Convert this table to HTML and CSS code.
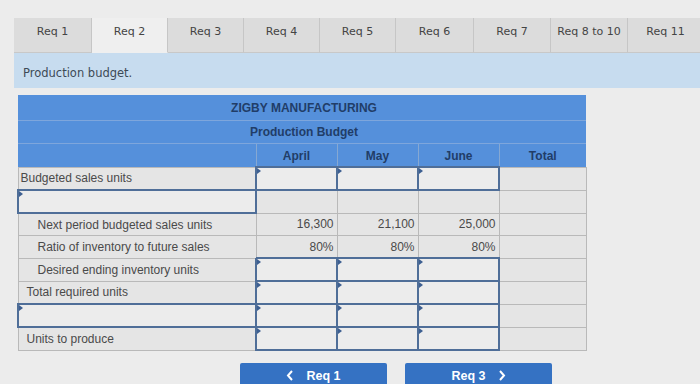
FILE: index.html
```html
<!DOCTYPE html>
<html>
<head>
<meta charset="utf-8">
<link rel="stylesheet" href="styles.css">
</head>
<body>
<div class="page">
  <div class="tabs">
    <div class="tab w78">Req 1</div>
    <div class="tab active">Req 2</div>
    <div class="tab">Req 3</div>
    <div class="tab">Req 4</div>
    <div class="tab">Req 5</div>
    <div class="tab w78">Req 6</div>
    <div class="tab w77">Req 7</div>
    <div class="tab w77">Req 8 to 10</div>
    <div class="tab">Req 11</div>
  </div>
  <div class="band">Production budget.</div>

  <table class="budget">
    <colgroup>
      <col class="c-label">
      <col class="c-num">
      <col class="c-num">
      <col class="c-num">
      <col class="c-total">
    </colgroup>
    <thead>
      <tr class="h1"><th colspan="5">ZIGBY MANUFACTURING</th></tr>
      <tr class="h2"><th colspan="5">Production Budget</th></tr>
      <tr class="h3"><th class="blank"></th><th>April</th><th>May</th><th>June</th><th>Total</th></tr>
    </thead>
    <tbody>
      <tr><td class="lbl">Budgeted sales units</td><td class="in"></td><td class="in"></td><td class="in"></td><td></td></tr>
      <tr><td class="lbl in"></td><td></td><td></td><td></td><td></td></tr>
      <tr><td class="lbl ind">Next period budgeted sales units</td><td class="num">16,300</td><td class="num">21,100</td><td class="num">25,000</td><td></td></tr>
      <tr><td class="lbl ind">Ratio of inventory to future sales</td><td class="num">80%</td><td class="num">80%</td><td class="num">80%</td><td></td></tr>
      <tr><td class="lbl ind">Desired ending inventory units</td><td class="in"></td><td class="in"></td><td class="in"></td><td></td></tr>
      <tr><td class="lbl sub">Total required units</td><td class="in"></td><td class="in"></td><td class="in"></td><td></td></tr>
      <tr><td class="lbl in"></td><td class="in"></td><td class="in"></td><td class="in"></td><td></td></tr>
      <tr><td class="lbl sub">Units to produce</td><td class="in"></td><td class="in"></td><td class="in"></td><td></td></tr>
    </tbody>
  </table>

  <div class="nav">
    <button class="btn"><svg width="8" height="11" viewBox="0 0 8 11"><path d="M6 1 L2 5.5 L6 10" fill="none" stroke="#fff" stroke-width="2"/></svg><span>Req 1</span></button>
    <button class="btn"><span>Req 3</span><svg width="8" height="11" viewBox="0 0 8 11"><path d="M2 1 L6 5.5 L2 10" fill="none" stroke="#fff" stroke-width="2"/></svg></button>
  </div>
</div>
</body>
</html>
```

FILE: styles.css
```css
html, body {
  margin: 0;
  padding: 0;
  background: #ececec;
  overflow: hidden;
}
.page {
  width: 700px;
  height: 384px;
  padding: 18px 0 0 14px;
  box-sizing: border-box;
  font-family: "DejaVu Sans", Verdana, sans-serif;
}
.tabs {
  display: flex;
  height: 35px;
}
.tab {
  width: 76px;
  flex: none;
  box-sizing: border-box;
  background: #dcdcdc;
  border-right: 1px solid #c6c6c6;
  border-bottom: 1px solid #c8c8c8;
  color: #444;
  font-size: 11px;
  display: flex;
  justify-content: center;
  align-items: center;
  padding-bottom: 7px;
}
.tab.w78 { width: 78px; }
.tab.w77 { width: 77px; }
.tab.active {
  background: #efefef;
  border-bottom-color: #efefef;
}
.band {
  height: 35px;
  box-sizing: border-box;
  background: #c7dcef;
  color: #3d4a56;
  font-size: 11.5px;
  display: flex;
  align-items: center;
  padding: 5px 0 0 9px;
}
.budget {
  margin: 7px 0 0 3px;
  border-collapse: collapse;
  table-layout: fixed;
  width: 568px;
  font-family: "Liberation Sans", Arial, sans-serif;
  font-size: 12px;
  color: #4a4a4a;
}
.c-label { width: 238px; }
.c-num { width: 81px; }
.c-total { width: 87px; }
.budget th {
  background: #5590db;
  color: #213d68;
  font-weight: bold;
  padding: 0;
}
.h1 th { height: 25px; border-bottom: 1px solid #7ea6dc; padding-left: 4px; }
.h2 th { height: 22px; border-bottom: 1px solid #7ea6dc; padding-left: 4px; }
.h3 th { height: 21px; border-left: 1px solid #86a8d2; padding-top: 1px; }
.h3 th.blank { border-left: none; }
.budget td {
  height: 21px;
  padding: 0 3px;
  background: #e5e5e5;
  border: 1px solid #b9b9b9;
  white-space: nowrap;
  position: relative;
}
.budget td.lbl { padding-left: 2px; }
.budget td.ind { padding-left: 19px; }
.budget td.sub { padding-left: 8px; }
.budget td.num { text-align: right; }
.budget td.in {
  border: 2px solid #4f6e98;
  background: #ececec;
}
.budget td.in::before {
  content: "";
  position: absolute;
  left: 0;
  top: 0;
  border-left: 4px solid #3d5f91;
  border-top: 3px solid transparent;
  border-bottom: 3px solid transparent;
}
.nav {
  display: flex;
  gap: 18px;
  margin: 12px 0 0 226px;
}
.btn {
  width: 147px;
  height: 30px;
  border: none;
  border-radius: 2px;
  background: #3572c3;
  color: #fff;
  font-family: "Liberation Sans", Arial, sans-serif;
  font-weight: bold;
  font-size: 12.5px;
  display: flex;
  justify-content: center;
  align-items: flex-start;
  padding-top: 6px;
  gap: 12px;
}
.btn svg { margin-top: 1px; }
```
